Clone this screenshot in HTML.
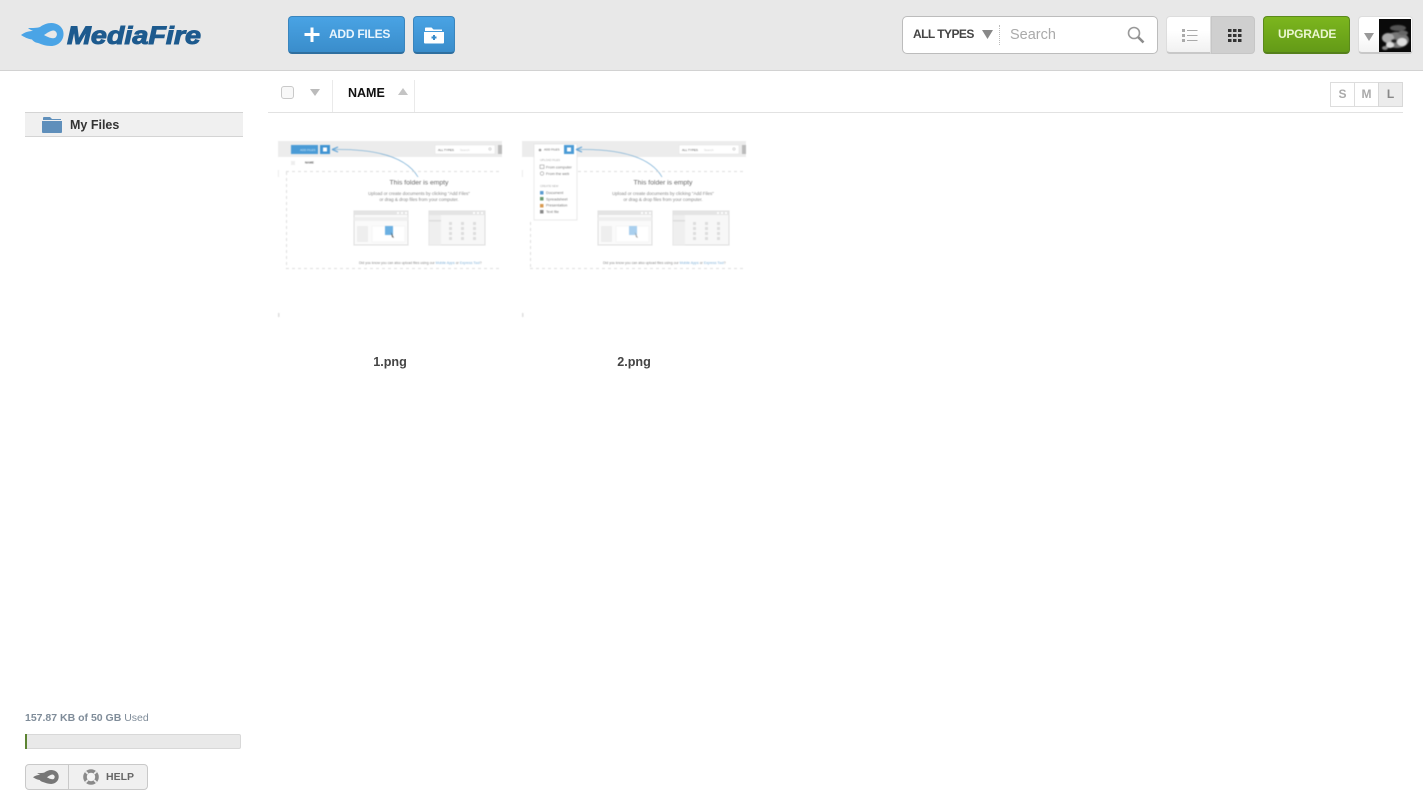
<!DOCTYPE html>
<html><head><meta charset="utf-8"><title>MediaFire</title>
<style>
*{box-sizing:border-box}
html,body{margin:0;padding:0;width:1423px;height:792px;overflow:hidden;background:#fff;font-family:"Liberation Sans",sans-serif}
.a{position:absolute}
svg{display:block;overflow:visible}
.t{white-space:nowrap}
</style></head><body>
<div class="a" style="left:0;top:0;width:1423px;height:71px;background:#e8e8e8;border-bottom:1px solid #d2d2d2"></div>

<svg class="a" style="left:0;top:0" width="210" height="70">
<path d="M21 35C25 32 29 31 33 31C31 30 29 29 28 28C33 28 37 28 40 27C44 24 50 22 55 23.500C61 25 64 30 63.500 35C63 41 58 46 51 46C46 46 42 44.500 38 43C35 42.500 33 41 32 39.500C28 39 24 37 21 35Z" fill="#4aa4e6"/>
<path d="M44 35C47 33 51 30 54 30.500C57 31.500 58 35 55.500 37.500C52.500 39.500 47.500 37 44 35Z" fill="#e8e8e8"/>
<text x="67" y="44" font-family="Liberation Sans" font-weight="bold" font-style="italic" font-size="25" fill="#1d5a8e" stroke="#1d5a8e" stroke-width="1" textLength="134" lengthAdjust="spacingAndGlyphs">MediaFire</text>
</svg>

<div class="a" style="left:288px;top:16px;width:117px;height:38px;border-radius:4px;background:linear-gradient(#49a3e4,#3a8dcb);border:1px solid #3a85bd;border-bottom:2px solid #2f6f9f"></div>
<svg class="a" style="left:304px;top:27px" width="16" height="16"><path d="M8 .5V15M.5 7.500H15.500" stroke="#fff" stroke-width="3"/></svg>
<div class="a t" style="left:329px;top:27px;font-size:12px;line-height:15px;font-weight:bold;color:#e9f5fd;letter-spacing:-.25px">ADD FILES</div>
<div class="a" style="left:413px;top:16px;width:42px;height:38px;border-radius:4px;background:linear-gradient(#49a3e4,#3a8dcb);border:1px solid #3a85bd;border-bottom:2px solid #2f6f9f"></div>
<svg class="a" style="left:424px;top:26px" width="20" height="18"><path d="M1 5V2.500C1 1.800 1.500 1.500 2 1.500H7.500L9.500 3.500H18V5Z" fill="#fff"/><path d="M0 6H20V16.500C20 17 19.500 17.500 19 17.500H1C.5 17.500 0 17 0 16.500Z" fill="#fff"/><path d="M10 9V14M7.500 11.500H12.500" stroke="#3a8dcb" stroke-width="2"/></svg>

<div class="a" style="left:902px;top:16px;width:256px;height:38px;background:#fff;border:1px solid #bcbcbc;border-radius:5px"></div>
<div class="a t" style="left:913px;top:27px;font-size:12px;line-height:15px;font-weight:bold;color:#444;letter-spacing:-.55px">ALL TYPES</div>
<svg class="a" style="left:982px;top:30px" width="11" height="9"><path d="M0 0H11L5.500 9Z" fill="#888"/></svg>
<div class="a" style="left:999px;top:25px;height:20px;border-left:1px dotted #bbb"></div>
<div class="a t" style="left:1010px;top:27px;font-size:14.500px;line-height:17px;color:#aaa">Search</div>
<svg class="a" style="left:1127px;top:26px" width="18" height="18"><circle cx="7" cy="7" r="5.500" fill="none" stroke="#999" stroke-width="1.600"/><path d="M11 11L16.500 16.500" stroke="#8c8c8c" stroke-width="2.600"/></svg>

<div class="a" style="left:1166px;top:16px;width:45px;height:38px;background:linear-gradient(#fff 40%,#f1f1f1);border:1px solid #ddd;border-bottom:2px solid #c8c8c8;border-radius:4px 0 0 4px"></div>
<div class="a" style="left:1211px;top:16px;width:44px;height:38px;background:#cfcfcf;border:1px solid #c6c6c6;border-radius:0 4px 4px 0"></div>
<svg class="a" style="left:1182px;top:29px" width="16" height="13"><path d="M5 1.500H15.500M5 6.500H15.500M5 11.500H15.500" stroke="#aaa"/><path d="M0 0h3v3h-3zM0 5h3v3h-3zM0 10h3v3h-3z" fill="#aaa"/></svg>
<svg class="a" style="left:1228px;top:29px" width="13" height="13" fill="#333"><path d="M0 0h3.500v3h-3.500zM5 0h3.500v3h-3.500zM10 0h3.500v3h-3.500zM0 5h3.500v3h-3.500zM5 5h3.500v3h-3.500zM10 5h3.500v3h-3.500zM0 10h3.500v3h-3.500zM5 10h3.500v3h-3.500zM10 10h3.500v3h-3.500z"/></svg>

<div class="a" style="left:1263px;top:16px;width:87px;height:38px;border-radius:4px;background:linear-gradient(#7cb61e,#639a17);border:1px solid #5b8a1c;border-bottom:2px solid #55801b"></div>
<div class="a t" style="left:1278px;top:27px;font-size:12px;line-height:15px;font-weight:bold;color:#eaf6cf;letter-spacing:-.27px">UPGRADE</div>

<div class="a" style="left:1358px;top:16px;width:55px;height:38px;background:linear-gradient(#fff 50%,#f3f3f3);border:1px solid #ddd;border-bottom:2px solid #c8c8c8;border-radius:4px"></div>
<svg class="a" style="left:1364px;top:33px" width="10" height="8"><path d="M0 0H10L5 8Z" fill="#999"/></svg>
<svg class="a" style="left:1379px;top:19px" width="32" height="33"><defs><filter id="b" x="-20%" y="-20%" width="140%" height="140%"><feGaussianBlur stdDeviation=".8"/></filter><clipPath id="c"><rect width="32" height="33"/></clipPath></defs><g clip-path="url(#c)"><rect width="32" height="33" fill="#0a0a0a"/><g filter="url(#b)"><ellipse cx="18" cy="21" rx="12" ry="8" fill="#777"/><ellipse cx="9" cy="19" rx="6" ry="5" fill="#aaa"/><ellipse cx="23" cy="23" rx="5" ry="4" fill="#ddd"/><ellipse cx="11" cy="26" rx="4" ry="3" fill="#ddd"/><ellipse cx="19" cy="9" rx="8" ry="3" fill="#555"/><ellipse cx="24" cy="14" rx="5" ry="2.500" fill="#666"/><ellipse cx="15" cy="22" rx="3" ry="2" fill="#222"/><ellipse cx="6" cy="29" rx="3" ry="2" fill="#888"/></g></g></svg>

<!-- header row -->
<div class="a" style="left:268px;top:112px;width:1135px;height:1px;background:#e2e2e2"></div>
<div class="a" style="left:332px;top:80px;width:1px;height:32px;background:#eaeaea"></div>
<div class="a" style="left:414px;top:80px;width:1px;height:32px;background:#eaeaea"></div>
<div class="a" style="left:281px;top:86px;width:13px;height:13px;border:1px solid #c9c9c9;border-radius:3px;background:#f8f8f8"></div>
<svg class="a" style="left:310px;top:89px" width="10" height="7"><path d="M0 0H10L5 7Z" fill="#bbb"/></svg>
<div class="a t" style="left:348px;top:85px;font-size:12.500px;line-height:15px;font-weight:bold;color:#111;padding-top:.5px">NAME</div>
<svg class="a" style="left:398px;top:88px" width="10" height="7"><path d="M0 7H10L5 0Z" fill="#c4c4c4"/></svg>

<div class="a" style="left:1330px;top:82px;width:25px;height:25px;border:1px solid #ddd;font:bold 12px/23px 'Liberation Sans',sans-serif;color:#aaa;text-align:center">S</div>
<div class="a" style="left:1354px;top:82px;width:25px;height:25px;border:1px solid #ddd;font:bold 12px/23px 'Liberation Sans',sans-serif;color:#aaa;text-align:center">M</div>
<div class="a" style="left:1378px;top:82px;width:25px;height:25px;border:1px solid #d8d8d8;background:#ececec;font:bold 12px/23px 'Liberation Sans',sans-serif;color:#888;text-align:center">L</div>

<!-- sidebar -->
<div class="a" style="left:25px;top:112px;width:218px;height:25px;background:#f0f0f0;border-top:1px solid #d4d4d4;border-bottom:1px solid #d4d4d4"></div>
<svg class="a" style="left:42px;top:117px" width="20" height="16"><path d="M1 3V1C1 .4 1.400 0 2 0H8L10 2H19V3Z" fill="#5f8fbb"/><path d="M0 4H20V15C20 15.600 19.600 16 19 16H1C.4 16 0 15.600 0 15Z" fill="#5f8fbb"/></svg>
<div class="a t" style="left:70px;top:117px;font-size:12.500px;line-height:16px;font-weight:bold;color:#333">My Files</div>

<div class="a t" style="left:25px;top:712px;font-size:10.500px;line-height:13px;color:#7f8c99"><b>157.87 KB of 50 GB</b> Used</div>
<div class="a" style="left:25px;top:734px;width:216px;height:15px;background:#e9e9e9;border:1px solid #d8d8d8;border-radius:2px"></div>
<div class="a" style="left:25px;top:734px;width:2px;height:15px;background:#5c8432"></div>

<div class="a" style="left:25px;top:764px;width:123px;height:26px;background:#f0f0f0;border:1px solid #c9c9c9;border-radius:4px"></div>
<div class="a" style="left:68px;top:765px;width:1px;height:24px;background:#c9c9c9"></div>
<svg class="a" style="left:33px;top:769px" width="26" height="16" viewBox="21 22 43 25"><path d="M21 35C25 32 29 31 33 31C31 30 29 29 28 28C33 28 37 28 40 27C44 24 50 22 55 23.500C61 25 64 30 63.500 35C63 41 58 46 51 46C46 46 42 44.500 38 43C35 42.500 33 41 32 39.500C28 39 24 37 21 35Z" fill="#777"/><path d="M44 35C47 33 51 30 54 30.500C57 31.500 58 35 55.500 37.500C52.500 39.500 47.500 37 44 35Z" fill="#f0f0f0"/></svg>
<svg class="a" style="left:83px;top:769px" width="16" height="16"><circle cx="8" cy="8" r="6" fill="none" stroke="#8a8a8a" stroke-width="3.600"/><circle cx="8" cy="8" r="3.800" fill="#f4f4f4"/><path d="M2.500 2.500L5 5M13.500 2.500L11 5M2.500 13.500L5 11M13.500 13.500L11 11" stroke="#eee" stroke-width="1.800"/></svg>
<div class="a t" style="left:106px;top:771px;font-size:10.500px;line-height:13px;font-weight:bold;color:#666">HELP</div>

<!-- thumb 1 -->
<svg class="a" style="left:278px;top:141px;filter:blur(.4px)" width="224" height="176" font-family="Liberation Sans">
<rect width="224" height="16" fill="#ececec"/>
<rect x="13" y="4" width="27" height="9" fill="#4a9bd6"/>
<text x="22" y="10" font-size="3" fill="#d5ecfa">ADD FILES</text>
<rect x="42" y="4" width="10" height="9" fill="#3f93d2"/>
<rect x="45" y="6.500" width="4" height="4" fill="#fff"/>
<path d="M54 8.500C80 8 125 10 140 36" fill="none" stroke="#6fa9d2" stroke-width=".7"/>
<path d="M54 8.500L60 6M54 8.500L60 11" fill="none" stroke="#5aa0d6" stroke-width="1"/>
<rect x="157" y="4" width="60" height="9" fill="#fff" stroke="#ddd" stroke-width=".4"/>
<text x="160" y="10" font-size="3" fill="#555">ALL TYPES</text>
<text x="182" y="10" font-size="3" fill="#ccc">Search</text>
<circle cx="212" cy="8" r="1.200" fill="none" stroke="#aaa" stroke-width=".5"/>
<rect x="220" y="4" width="4" height="9" fill="#bbb"/>
<text x="27" y="22.500" font-size="3" font-weight="bold" fill="#555">NAME</text>
<rect x="13" y="20" width="4" height="4" fill="#eee"/>
<path d="M8 30.500H224M8 127.500H224M8.500 31V128" stroke="#d4d4d4" stroke-width=".8" stroke-dasharray="3 3" fill="none"/>
<rect x="0" y="29" width=".8" height="7" fill="#e6e6e6"/>
<rect x="0" y="172" width="1.500" height="4" fill="#ddd"/>
<text x="141" y="43.500" text-anchor="middle" font-size="6.800" fill="#666">This folder is empty</text>
<text x="141" y="54" text-anchor="middle" font-size="4.500" fill="#888">Upload or create documents by clicking "Add Files"</text>
<text x="141" y="60" text-anchor="middle" font-size="4.500" fill="#888">or drag &amp; drop files from your computer.</text>
<rect x="76" y="70" width="54" height="34" fill="#fafafa" stroke="#ddd"/>
<rect x="76" y="70" width="54" height="4" fill="#e4e4e4"/>
<path d="M119 71h2v2h-2zM123 71h2v2h-2zM127 71h2v2h-2z" fill="#fff"/>
<rect x="76" y="76" width="54" height="4" fill="#efefef"/>
<rect x="79" y="85" width="11" height="16" fill="#eee"/>
<rect x="94" y="85" width="33" height="16" fill="#fff" stroke="#eee" stroke-width=".5"/>
<rect x="107" y="85" width="8" height="9" fill="#6bb0e2"/><path d="M113 91L116 97L114 96Z" fill="#555"/>
<rect x="151" y="70" width="56" height="34" fill="#f7f7f7" stroke="#ddd"/>
<rect x="151" y="70" width="56" height="4" fill="#e4e4e4"/>
<path d="M195 71h2v2h-2zM199 71h2v2h-2zM203 71h2v2h-2z" fill="#fff"/>
<rect x="151" y="74" width="12" height="30" fill="#efefef"/>
<rect x="151" y="79" width="12" height="1.500" fill="#ddd"/>
<path d="M171 81h3v3h-3zM183 81h3v3h-3zM195 81h3v3h-3zM171 86h3v3h-3zM183 86h3v3h-3zM195 86h3v3h-3zM171 91h3v3h-3zM183 91h3v3h-3zM195 91h3v3h-3zM171 96h3v3h-3zM183 96h3v3h-3zM195 96h3v3h-3z" fill="#ddd"/>
<text x="81" y="123" font-size="3.500" fill="#888">Did you know you can also upload files using our <tspan fill="#7fb0d8">Mobile Apps</tspan> or <tspan fill="#7fb0d8">Express Tool</tspan>?</text>
</svg>

<!-- thumb 2 -->
<svg class="a" style="left:522px;top:141px;filter:blur(.4px)" width="224" height="176" font-family="Liberation Sans">
<rect width="224" height="16" fill="#ececec"/>
<rect x="12" y="3" width="43" height="76" fill="#fff" stroke="#e2e2e2" stroke-width=".7"/>
<circle cx="18" cy="9" r="1.300" fill="#999"/>
<text x="22" y="9.500" font-size="3" fill="#666">ADD FILES</text>
<rect x="42" y="4" width="10" height="9" fill="#4a9bd6"/>
<rect x="45" y="6.500" width="4" height="4" fill="#fff"/>
<path d="M54 8.500C80 8 125 10 140 36" fill="none" stroke="#6fa9d2" stroke-width=".7"/>
<path d="M54 8.500L60 6M54 8.500L60 11" fill="none" stroke="#5aa0d6" stroke-width="1"/>
<text x="18" y="20" font-size="2.800" fill="#aaa">UPLOAD FILES</text>
<rect x="18" y="24" width="4" height="3.500" fill="none" stroke="#888" stroke-width=".5"/>
<text x="24" y="27.500" font-size="3.800" fill="#777">From computer</text>
<circle cx="20" cy="32.500" r="1.800" fill="none" stroke="#888" stroke-width=".5"/>
<text x="24" y="34" font-size="3.800" fill="#777">From the web</text>
<text x="18" y="46" font-size="2.800" fill="#aaa">CREATE NEW</text>
<rect x="18" y="50" width="3.500" height="3.500" fill="#5a9bd0"/><text x="24" y="53" font-size="3.800" fill="#777">Document</text>
<rect x="18" y="56" width="3.500" height="3.500" fill="#6a9a70"/><text x="24" y="59.500" font-size="3.800" fill="#777">Spreadsheet</text>
<rect x="18" y="63" width="3.500" height="3.500" fill="#d89a50"/><text x="24" y="65.500" font-size="3.800" fill="#777">Presentation</text>
<rect x="18" y="69" width="3.500" height="3.500" fill="#888"/><text x="24" y="72" font-size="3.800" fill="#777">Text file</text>
<rect x="157" y="4" width="60" height="9" fill="#fff" stroke="#ddd" stroke-width=".4"/>
<text x="160" y="10" font-size="3" fill="#555">ALL TYPES</text>
<text x="182" y="10" font-size="3" fill="#ccc">Search</text>
<circle cx="212" cy="8" r="1.200" fill="none" stroke="#aaa" stroke-width=".5"/>
<rect x="220" y="4" width="4" height="9" fill="#bbb"/>
<path d="M56 30.500H224M8 127.500H224M8.500 81V128" stroke="#d4d4d4" stroke-width=".8" stroke-dasharray="3 3" fill="none"/>
<rect x="0" y="29" width=".8" height="7" fill="#e6e6e6"/>
<rect x="0" y="172" width="1.500" height="4" fill="#ddd"/>
<text x="141" y="43.500" text-anchor="middle" font-size="6.800" fill="#666">This folder is empty</text>
<text x="141" y="54" text-anchor="middle" font-size="4.500" fill="#888">Upload or create documents by clicking "Add Files"</text>
<text x="141" y="60" text-anchor="middle" font-size="4.500" fill="#888">or drag &amp; drop files from your computer.</text>
<rect x="76" y="70" width="54" height="34" fill="#fafafa" stroke="#ddd"/>
<rect x="76" y="70" width="54" height="4" fill="#e4e4e4"/>
<path d="M119 71h2v2h-2zM123 71h2v2h-2zM127 71h2v2h-2z" fill="#fff"/>
<rect x="76" y="76" width="54" height="4" fill="#efefef"/>
<rect x="79" y="85" width="11" height="16" fill="#eee"/>
<rect x="94" y="85" width="33" height="16" fill="#fff" stroke="#eee" stroke-width=".5"/>
<rect x="107" y="85" width="8" height="9" fill="#a9cfee"/><path d="M113 91L116 97L114 96Z" fill="#999"/>
<rect x="151" y="70" width="56" height="34" fill="#f7f7f7" stroke="#ddd"/>
<rect x="151" y="70" width="56" height="4" fill="#e4e4e4"/>
<path d="M195 71h2v2h-2zM199 71h2v2h-2zM203 71h2v2h-2z" fill="#fff"/>
<rect x="151" y="74" width="12" height="30" fill="#efefef"/>
<rect x="151" y="79" width="12" height="1.500" fill="#ddd"/>
<path d="M171 81h3v3h-3zM183 81h3v3h-3zM195 81h3v3h-3zM171 86h3v3h-3zM183 86h3v3h-3zM195 86h3v3h-3zM171 91h3v3h-3zM183 91h3v3h-3zM195 91h3v3h-3zM171 96h3v3h-3zM183 96h3v3h-3zM195 96h3v3h-3z" fill="#ddd"/>
<text x="81" y="123" font-size="3.500" fill="#888">Did you know you can also upload files using our <tspan fill="#7fb0d8">Mobile Apps</tspan> or <tspan fill="#7fb0d8">Express Tool</tspan>?</text>
</svg>

<div class="a" style="left:290px;top:354px;width:200px;text-align:center;font-size:12.600px;line-height:16px;font-weight:bold;color:#444">1.png</div>
<div class="a" style="left:534px;top:354px;width:200px;text-align:center;font-size:12.600px;line-height:16px;font-weight:bold;color:#444">2.png</div>
</body></html>
